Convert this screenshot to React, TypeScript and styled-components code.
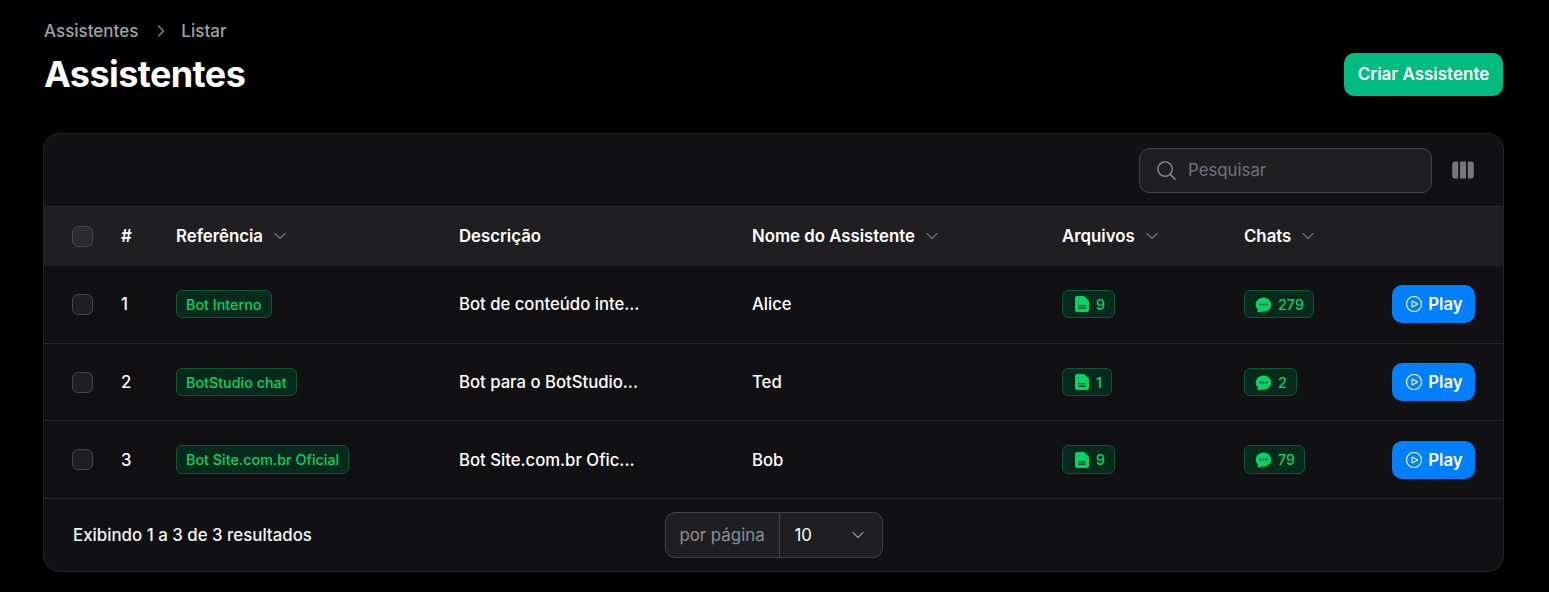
import React from 'react';
import styled, { createGlobalStyle } from 'styled-components';
import {
  HiChatBubbleOvalLeftEllipsis,
  HiOutlinePlayCircle,
  HiOutlineMagnifyingGlass,
  HiMiniViewColumns,
  HiOutlineChevronDown,
  HiOutlineChevronRight,
} from 'react-icons/hi2';

const Global = createGlobalStyle`
  html, body { margin: 0; padding: 0; background: #000; }
  body { font-family: Inter, "Liberation Sans", sans-serif; color: #fff; }
  * { box-sizing: border-box; }
`;

const Page = styled.div`
  width: 1549px;
  height: 592px;
  padding: 20px 46px 0 44px;
  background: #000;
  overflow: hidden;
`;
const Header = styled.header`
  display: flex;
  justify-content: space-between;
  align-items: flex-start;
  height: 76px;
  margin-bottom: 37px;
`;
const Breadcrumb = styled.nav`
  display: flex;
  align-items: center;
  height: 22px;
  font-size: 17px;
  font-weight: 500;
  line-height: 22px;
  svg { width: 16px; height: 16px; margin: 0 12px 0 15px; stroke-width: 2; color: #85858c; }
`;
const Crumb = styled.span`
  color: #a1a1aa;
`;
const Title = styled.h1`
  margin: 12px 0 0;
  font-size: 36px;
  line-height: 40px;
  font-weight: 700;
  letter-spacing: -0.6px;
  color: #fff;
`;
const CreateButton = styled.button`
  align-self: flex-end;
  width: 159px;
  height: 43px;
  padding: 0 0 1px;
  border: 0;
  border-radius: 10px;
  background: #00bb7f;
  color: #fff;
  font: 600 17px Inter, sans-serif;
`;
const Card = styled.section`
  margin-left: -1px;
  width: 1461px;
  height: 439px;
  background: #111113;
  border: 1px solid #232326;
  border-radius: 16px;
  overflow: hidden;
`;
const Toolbar = styled.div`
  height: 73px;
  display: flex;
  align-items: center;
  justify-content: flex-end;
  padding: 0 28px 0 0;
  gap: 19px;
  border-bottom: 1px solid #29292c;
`;
const Search = styled.div`
  width: 293px;
  height: 45px;
  display: flex;
  align-items: center;
  gap: 10px;
  padding-left: 15px;
  border: 1px solid #444448;
  border-radius: 10px;
  background: #1f1f22;
  color: #71717a;
  font-size: 16.8px;
  svg { width: 23px; height: 23px; color: #8b8b92; }
`;
const ColumnsIcon = styled(HiMiniViewColumns)`
  width: 24px;
  height: 24px;
  color: #76767c;
`;
const gridCols = '49px 55px 283px 293px 310px 182px 130px 1fr';
const HeadRow = styled.div`
  display: grid;
  grid-template-columns: ${gridCols};
  align-items: center;
  height: 59px;
  padding: 0 28px 1px;
  background: #1f1f22;
  font-size: 16.8px;
  font-weight: 600;
  color: #fff;
`;
const HeadCell = styled.div`
  display: flex;
  align-items: center;
  gap: 9px;
  svg { width: 16px; height: 16px; stroke-width: 2; color: #6b6b72; }
`;
const Row = styled.div`
  display: grid;
  grid-template-columns: ${gridCols};
  align-items: center;
  height: ${p => p.$h}px;
  padding: 0 28px ${p => p.$pb}px;
  border-bottom: 1px solid #29292c;
  font-size: 16.7px;
  font-weight: 450;
  color: #fff;
`;
const Check = styled.span`
  display: block;
  width: 21px;
  height: 21px;
  border: 1px solid #46464a;
  border-radius: 6px;
  background: ${p => (p.$head ? '#2b2b2f' : '#1f1f22')};
`;
const Badge = styled.span`
  display: inline-flex;
  align-items: center;
  height: 28.5px;
  padding: 0 9px;
  gap: 5px;
  border: 1px solid #075a32;
  border-radius: 6px;
  background: #062a1b;
  color: #05d267;
  font-size: 14.35px;
  font-weight: 500;
  vertical-align: middle;
`;
const ChatIcon = styled(HiChatBubbleOvalLeftEllipsis)`
  width: 19px;
  height: 19px;
`;
const DocSvg = styled.svg`
  width: 14px;
  height: 16px;
  margin: 0 2px 0 3px;
`;
const DocIcon = () => (
  <DocSvg viewBox="0 0 14 16" aria-hidden="true">
    <path
      fill="currentColor"
      d="M2 0h6.6c.4 0 .8.2 1.1.5l3.8 3.8c.3.3.5.7.5 1.1V14a2 2 0 0 1-2 2H2a2 2 0 0 1-2-2V2a2 2 0 0 1 2-2z"
    />
    <path stroke="#062a1b" strokeWidth="1.1" d="M3.5 9.6h7M3.5 12.1h7" />
  </DocSvg>
);
const PlayCell = styled.div`
  display: flex;
  justify-content: flex-end;
`;
const PlayButton = styled.button`
  width: 83px;
  height: 38px;
  display: flex;
  align-items: center;
  justify-content: center;
  gap: 4px;
  border: 0;
  border-radius: 10px;
  background: #0080ff;
  color: #fff;
  font: 600 16.8px Inter, sans-serif;
  svg { width: 20px; height: 20px; stroke-width: 1.3; }
`;
const Footer = styled.div`
  height: 72px;
  display: grid;
  grid-template-columns: 1fr auto 1fr;
  align-items: center;
  padding: 0 29px;
  font-size: 16.85px;
  font-weight: 500;
  color: #f4f4f5;
`;
const PerPage = styled.div`
  display: flex;
  width: 218px;
  height: 46px;
  border: 1px solid #444448;
  border-radius: 10px;
  background: #1f1f22;
  font-weight: 400;
  overflow: hidden;
`;
const PerLabel = styled.span`
  width: 114px;
  display: flex;
  align-items: center;
  justify-content: center;
  border-right: 1px solid #444448;
  color: #8f8f96;
`;
const PerValue = styled.span`
  flex: 1;
  display: flex;
  align-items: center;
  justify-content: space-between;
  padding: 0 16px 0 15px;
  color: #fff;
  svg { width: 16px; height: 16px; stroke-width: 2; color: #8b8b92; }
`;

const rows = [
  { n: 1, ref: 'Bot Interno', desc: 'Bot de conteúdo inte...', name: 'Alice', files: 9, chats: 279, h: 78, pb: 1 },
  { n: 2, ref: 'BotStudio chat', desc: 'Bot para o BotStudio...', name: 'Ted', files: 1, chats: 2, h: 77, pb: 0 },
  { n: 3, ref: 'Bot Site.com.br Oficial', desc: 'Bot Site.com.br Ofic...', name: 'Bob', files: 9, chats: 79, h: 78, pb: 0 },
];

export default function App() {
  return (
    <Page>
      <Global />
      <Header>
        <div>
          <Breadcrumb>
            <Crumb>Assistentes</Crumb>
            <HiOutlineChevronRight />
            <Crumb>Listar</Crumb>
          </Breadcrumb>
          <Title>Assistentes</Title>
        </div>
        <CreateButton>Criar Assistente</CreateButton>
      </Header>
      <Card>
        <Toolbar>
          <Search>
            <HiOutlineMagnifyingGlass />
            <span>Pesquisar</span>
          </Search>
          <ColumnsIcon />
        </Toolbar>
        <HeadRow>
          <Check $head />
          <HeadCell>#</HeadCell>
          <HeadCell>Referência <HiOutlineChevronDown /></HeadCell>
          <HeadCell>Descrição</HeadCell>
          <HeadCell>Nome do Assistente <HiOutlineChevronDown /></HeadCell>
          <HeadCell>Arquivos <HiOutlineChevronDown /></HeadCell>
          <HeadCell>Chats <HiOutlineChevronDown /></HeadCell>
          <span />
        </HeadRow>
        {rows.map(r => (
          <Row key={r.n} $h={r.h} $pb={r.pb}>
            <Check />
            <span>{r.n}</span>
            <div><Badge>{r.ref}</Badge></div>
            <span>{r.desc}</span>
            <span>{r.name}</span>
            <div><Badge><DocIcon />{r.files}</Badge></div>
            <div><Badge><ChatIcon />{r.chats}</Badge></div>
            <PlayCell><PlayButton><HiOutlinePlayCircle />Play</PlayButton></PlayCell>
          </Row>
        ))}
        <Footer>
          <span>Exibindo 1 a 3 de 3 resultados</span>
          <PerPage>
            <PerLabel>por página</PerLabel>
            <PerValue>10 <HiOutlineChevronDown /></PerValue>
          </PerPage>
          <span />
        </Footer>
      </Card>
    </Page>
  );
}
